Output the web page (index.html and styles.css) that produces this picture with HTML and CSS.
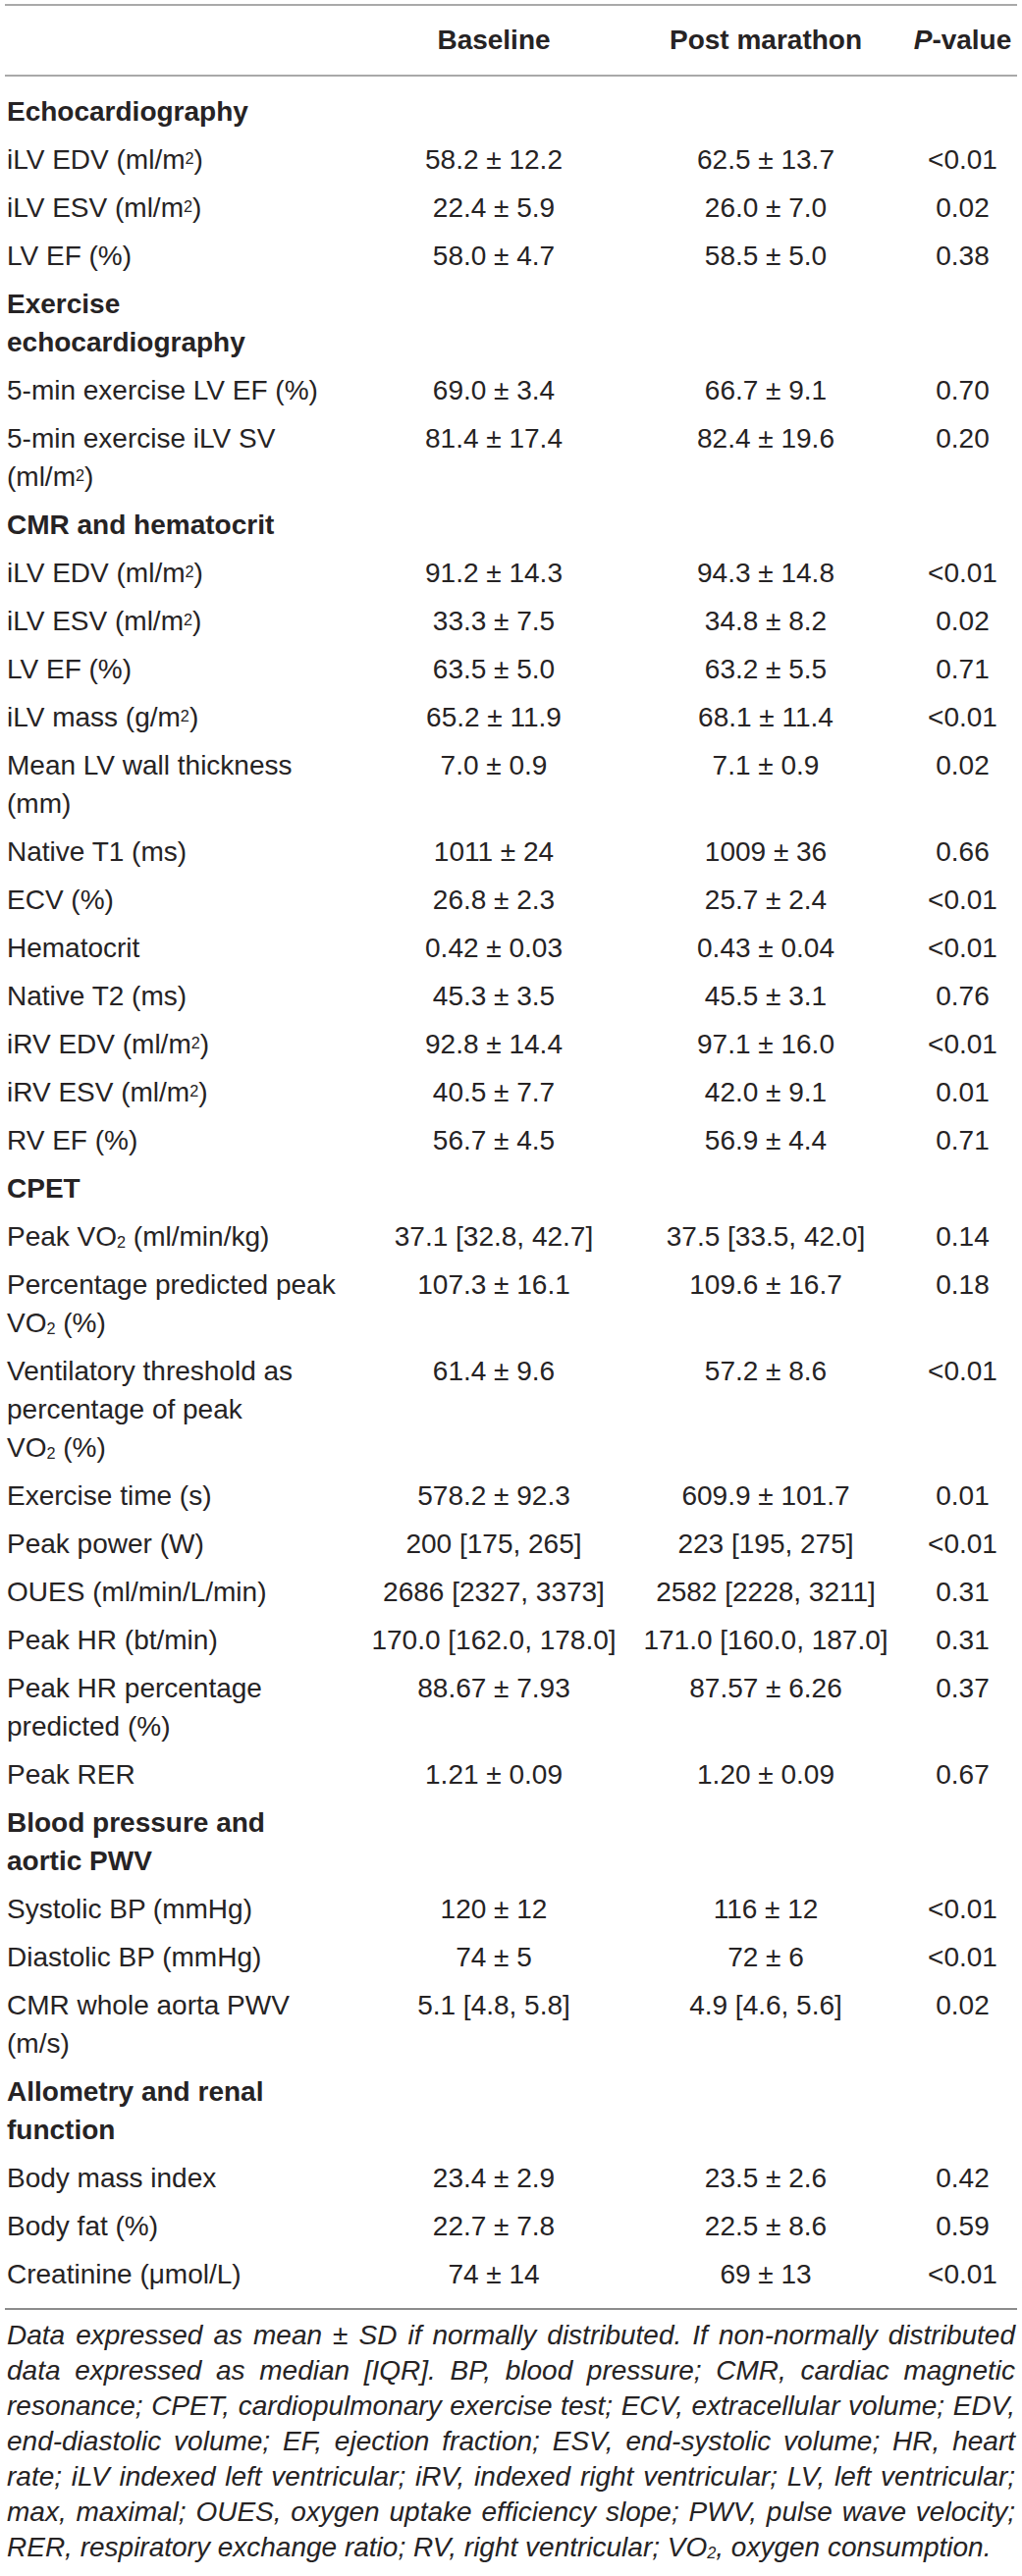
FILE: index.html
```html
<!DOCTYPE html>
<html lang="en">
<head>
  <meta charset="UTF-8">
  <title>Baseline and post marathon</title>
  <link rel="stylesheet" href="styles.css">
</head>
<body>
  <div class="wrapper">
    <table class="stats">
      <colgroup>
        <col class="col-label">
        <col class="col-base">
        <col class="col-post">
        <col class="col-p">
      </colgroup>
      <thead>
        <tr>
          <th></th>
          <th>Baseline</th>
          <th>Post marathon</th>
          <th class="pval"><i>P</i>-value</th>
        </tr>
      </thead>
      <tbody>
        <tr class="section"><td>Echocardiography</td><td></td><td></td><td></td></tr>
        <tr><td>iLV EDV (ml/m<sup>2</sup>)</td><td>58.2 ± 12.2</td><td>62.5 ± 13.7</td><td>&lt;0.01</td></tr>
        <tr><td>iLV ESV (ml/m<sup>2</sup>)</td><td>22.4 ± 5.9</td><td>26.0 ± 7.0</td><td>0.02</td></tr>
        <tr><td>LV EF (%)</td><td>58.0 ± 4.7</td><td>58.5 ± 5.0</td><td>0.38</td></tr>

        <tr class="section"><td>Exercise echocardiography</td><td></td><td></td><td></td></tr>
        <tr><td>5-min exercise LV EF (%)</td><td>69.0 ± 3.4</td><td>66.7 ± 9.1</td><td>0.70</td></tr>
        <tr><td>5-min exercise iLV SV (ml/m<sup>2</sup>)</td><td>81.4 ± 17.4</td><td>82.4 ± 19.6</td><td>0.20</td></tr>

        <tr class="section"><td>CMR and hematocrit</td><td></td><td></td><td></td></tr>
        <tr><td>iLV EDV (ml/m<sup>2</sup>)</td><td>91.2 ± 14.3</td><td>94.3 ± 14.8</td><td>&lt;0.01</td></tr>
        <tr><td>iLV ESV (ml/m<sup>2</sup>)</td><td>33.3 ± 7.5</td><td>34.8 ± 8.2</td><td>0.02</td></tr>
        <tr><td>LV EF (%)</td><td>63.5 ± 5.0</td><td>63.2 ± 5.5</td><td>0.71</td></tr>
        <tr><td>iLV mass (g/m<sup>2</sup>)</td><td>65.2 ± 11.9</td><td>68.1 ± 11.4</td><td>&lt;0.01</td></tr>
        <tr><td>Mean LV wall thickness (mm)</td><td>7.0 ± 0.9</td><td>7.1 ± 0.9</td><td>0.02</td></tr>
        <tr><td>Native T1 (ms)</td><td>1011 ± 24</td><td>1009 ± 36</td><td>0.66</td></tr>
        <tr><td>ECV (%)</td><td>26.8 ± 2.3</td><td>25.7 ± 2.4</td><td>&lt;0.01</td></tr>
        <tr><td>Hematocrit</td><td>0.42 ± 0.03</td><td>0.43 ± 0.04</td><td>&lt;0.01</td></tr>
        <tr><td>Native T2 (ms)</td><td>45.3 ± 3.5</td><td>45.5 ± 3.1</td><td>0.76</td></tr>
        <tr><td>iRV EDV (ml/m<sup>2</sup>)</td><td>92.8 ± 14.4</td><td>97.1 ± 16.0</td><td>&lt;0.01</td></tr>
        <tr><td>iRV ESV (ml/m<sup>2</sup>)</td><td>40.5 ± 7.7</td><td>42.0 ± 9.1</td><td>0.01</td></tr>
        <tr><td>RV EF (%)</td><td>56.7 ± 4.5</td><td>56.9 ± 4.4</td><td>0.71</td></tr>

        <tr class="section"><td>CPET</td><td></td><td></td><td></td></tr>
        <tr><td>Peak VO<sub>2</sub> (ml/min/kg)</td><td>37.1 [32.8, 42.7]</td><td>37.5 [33.5, 42.0]</td><td>0.14</td></tr>
        <tr><td>Percentage predicted peak VO<sub>2</sub>&nbsp;(%)</td><td>107.3 ± 16.1</td><td>109.6 ± 16.7</td><td>0.18</td></tr>
        <tr><td>Ventilatory threshold as percentage of peak VO<sub>2</sub>&nbsp;(%)</td><td>61.4 ± 9.6</td><td>57.2 ± 8.6</td><td>&lt;0.01</td></tr>
        <tr><td>Exercise time (s)</td><td>578.2 ± 92.3</td><td>609.9 ± 101.7</td><td>0.01</td></tr>
        <tr><td>Peak power (W)</td><td>200 [175, 265]</td><td>223 [195, 275]</td><td>&lt;0.01</td></tr>
        <tr><td>OUES (ml/min/L/min)</td><td>2686 [2327, 3373]</td><td>2582 [2228, 3211]</td><td>0.31</td></tr>
        <tr><td>Peak HR (bt/min)</td><td>170.0 [162.0, 178.0]</td><td>171.0 [160.0, 187.0]</td><td>0.31</td></tr>
        <tr><td>Peak HR percentage predicted (%)</td><td>88.67 ± 7.93</td><td>87.57 ± 6.26</td><td>0.37</td></tr>
        <tr><td>Peak RER</td><td>1.21 ± 0.09</td><td>1.20 ± 0.09</td><td>0.67</td></tr>

        <tr class="section"><td>Blood pressure and aortic PWV</td><td></td><td></td><td></td></tr>
        <tr><td>Systolic BP (mmHg)</td><td>120 ± 12</td><td>116 ± 12</td><td>&lt;0.01</td></tr>
        <tr><td>Diastolic BP (mmHg)</td><td>74 ± 5</td><td>72 ± 6</td><td>&lt;0.01</td></tr>
        <tr><td>CMR whole aorta PWV (m/s)</td><td>5.1 [4.8, 5.8]</td><td>4.9 [4.6, 5.6]</td><td>0.02</td></tr>

        <tr class="section"><td>Allometry and renal function</td><td></td><td></td><td></td></tr>
        <tr><td>Body mass index</td><td>23.4 ± 2.9</td><td>23.5 ± 2.6</td><td>0.42</td></tr>
        <tr><td>Body fat (%)</td><td>22.7 ± 7.8</td><td>22.5 ± 8.6</td><td>0.59</td></tr>
        <tr><td>Creatinine (μmol/L)</td><td>74 ± 14</td><td>69 ± 13</td><td>&lt;0.01</td></tr>
      </tbody>
    </table>

    <p class="note">Data expressed as mean ± SD if normally distributed. If non-normally distributed data expressed as median [IQR]. BP, blood pressure; CMR, cardiac magnetic resonance; CPET, cardiopulmonary exercise test; ECV, extracellular volume; EDV, end-diastolic volume; EF, ejection fraction; ESV, end-systolic volume; HR, heart rate; iLV indexed left ventricular; iRV, indexed right ventricular; LV, left ventricular; max, maximal; OUES, oxygen uptake efficiency slope; PWV, pulse wave velocity; RER, respiratory exchange ratio; RV, right ventricular; VO<sub>2</sub>, oxygen consumption.</p>
  </div>
</body>
</html>
```

FILE: styles.css
```css
body {
  margin: 0;
  padding: 4px 5px 0 5px;
  background: #fff;
  color: #262324;
  font-family: "Liberation Sans", Arial, sans-serif;
}

.wrapper {
  width: 1031px;
}

.stats {
  width: 1031px;
  border-collapse: collapse;
  table-layout: fixed;
  font-size: 28px;
  line-height: 39px;
}

.col-label { width: 350px; }
.col-base { width: 296px; }
.col-post { width: 258px; }
.col-p { width: 127px; }

.stats th {
  font-weight: bold;
  text-align: center;
  padding: 15px 0 16px;
  border-top: 2px solid #a9a9a9;
  border-bottom: 2px solid #a9a9a9;
}

.stats td {
  padding: 5px 0;
  text-align: center;
  vertical-align: top;
}

.stats td:first-child {
  text-align: left;
  padding-left: 2px;
  padding-right: 6px;
}

.stats .pval,
.stats td:last-child {
  padding-left: 16px;
}

.stats .section td {
  font-weight: bold;
}

.stats tbody tr:first-child td {
  padding-top: 16px;
}

.stats tbody tr:last-child td {
  padding-bottom: 15px;
}

sup,
sub {
  font-size: 0.58em;
  line-height: 0;
}

sup {
  vertical-align: 0.32em;
}

sub {
  vertical-align: -0.12em;
}

.note {
  margin: 0;
  padding: 8px 2px 0;
  border-top: 2px solid #8c8c8c;
  font-size: 28px;
  line-height: 36px;
  font-style: italic;
  text-align: justify;
}
```
